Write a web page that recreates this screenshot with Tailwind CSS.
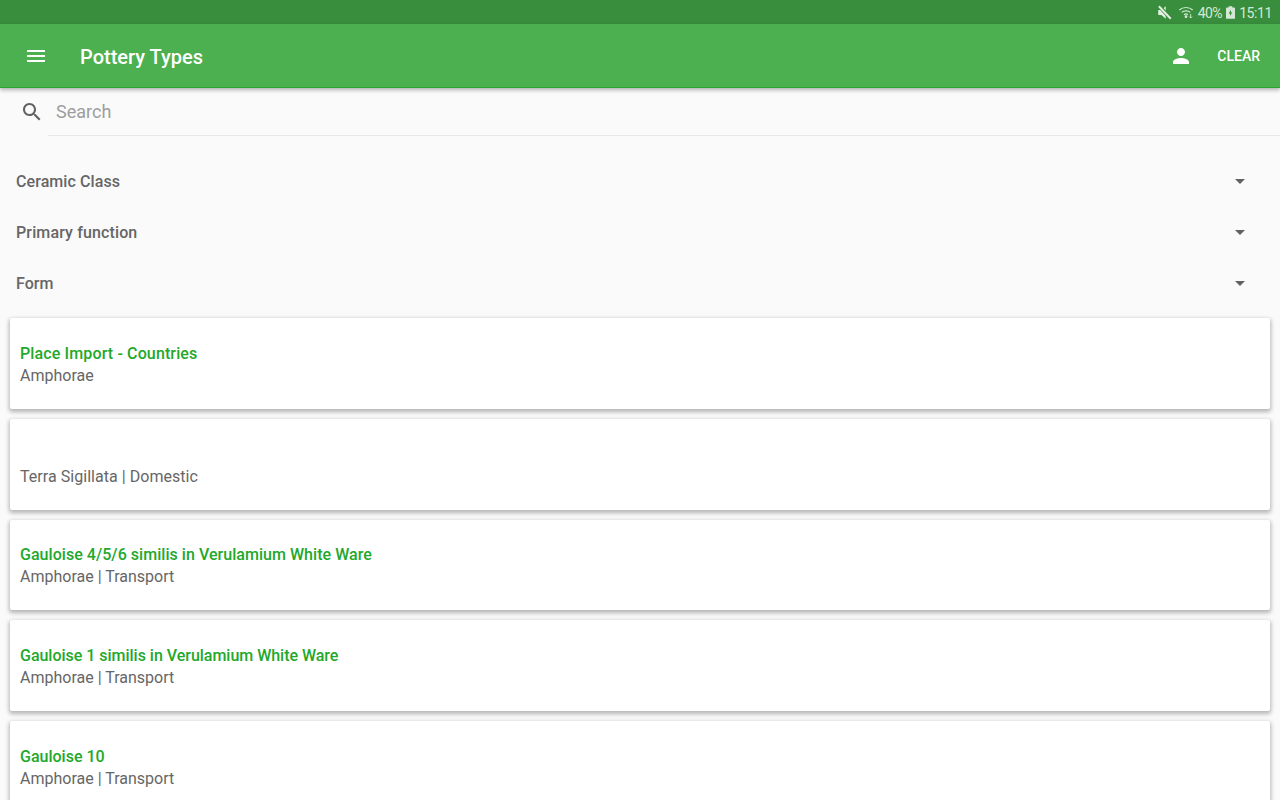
<!DOCTYPE html>
<html lang="en">
<head>
    <meta charset="UTF-8">
    <meta name="viewport" content="width=device-width, initial-scale=1.0">
    <title>Pottery Types</title>
    <script src="https://cdn.jsdelivr.net/npm/@tailwindcss/browser@4"></script>
</head>
<body class="bg-[#fafafa] font-[Roboto,sans-serif] h-[800px] overflow-hidden">
    <!-- status bar -->
    <div class="h-6 bg-[#388e3c] flex items-center justify-end pr-2 text-[14px] text-[#d5e8d6]">
        <svg class="w-[15px] h-[15px] mr-[6px]" viewBox="0 0 24 24" fill="#e4f0e4"><path d="M2 8v8h5l7 6V2L7 8H2z"/><path d="M3 1l19 21" stroke="#388e3c" stroke-width="6"/><path d="M3 2l19 20" stroke="#e4f0e4" stroke-width="3"/></svg>
        <svg class="w-4 h-4 mr-[4px]" viewBox="0 0 24 24" fill="none" stroke="#d5e8d6" stroke-width="1.8"><path d="M2 9c5.500-5 14.500-5 20 0"/><path d="M5.500 12.500c3.500-3 9.500-3 13 0"/><path d="M9 16c1.700-1.300 4.300-1.300 6 0"/><circle cx="12" cy="19" r="1.200" fill="#d5e8d6"/><path d="M19 15v6M17 19l2 2 2-2" stroke-width="1.400"/></svg>
        <span class="pt-[2px] tracking-[-0.5px] mr-[4px]">40%</span>
        <svg class="w-[9px] h-[13px] mr-[4px]" viewBox="0 0 10 14" fill="#d5e8d6"><path d="M3 0h4v1.500h2a1 1 0 0 1 1 1V13a1 1 0 0 1-1 1H1a1 1 0 0 1-1-1V2.500a1 1 0 0 1 1-1h2z"/><path d="M5.500 4L3 8h1.500v3L7 7H5.500z" fill="#388e3c"/></svg>
        <span class="pt-[2px] tracking-[-0.4px]">15:11</span>
    </div>
    <!-- app bar -->
    <header class="h-16 bg-[#4caf50] border-b border-[#2aa52f] shadow-[0_2px_4px_rgba(0,0,0,0.3)] flex items-center relative">
        <button class="w-[72px] pl-6 flex">
            <svg class="w-6 h-6" viewBox="0 0 24 24" fill="#fff"><path d="M3 18h18v-2H3v2zm0-5h18v-2H3v2zm0-7v2h18V6H3z"/></svg>
        </button>
        <h1 class="ml-2 pt-[2px] text-[20px] font-medium text-white flex-1">Pottery Types</h1>
        <svg class="w-6 h-6 mr-[24px]" viewBox="0 0 24 24" fill="#fff"><path d="M12 12c2.210 0 4-1.790 4-4s-1.790-4-4-4-4 1.790-4 4 1.790 4 4 4zm0 2c-2.670 0-8 1.340-8 4v2h16v-2c0-2.660-5.330-4-8-4z"/></svg>
        <button class="pt-[2px] text-[14px] font-medium text-white mr-5">CLEAR</button>
    </header>
    <!-- search -->
    <div class="h-12 flex">
        <div class="w-12 flex items-center justify-end pr-1">
            <svg class="w-6 h-6" viewBox="0 0 24 24" fill="#616161"><path d="M15.500 14h-.79l-.28-.27C15.410 12.590 16 11.110 16 9.500 16 5.910 13.090 3 9.500 3S3 5.910 3 9.500 5.910 16 9.500 16c1.610 0 3.090-.59 4.230-1.570l.27.28v.79l5 4.990L20.490 19l-4.990-5zm-6 0C7.010 14 5 11.990 5 9.500S7.010 5 9.500 5 14 7.010 14 9.500 11.990 14 9.500 14z"/></svg>
        </div>
        <div class="flex-1 border-b border-[#e8e8e8] pl-2 flex items-center text-[18px] text-[#9e9e9e]">Search</div>
    </div>
    <!-- filters -->
    <div class="pt-[20px]">
        <div class="h-[51px] flex items-center justify-between px-4 text-[16px] font-medium text-[#666666]">
            <span class="tracking-[0.08px]">Ceramic Class</span>
            <span class="w-0 h-0 mr-[19px] border-x-[5px] border-x-transparent border-t-[5px] border-t-[#616161]"></span>
        </div>
        <div class="h-[51px] flex items-center justify-between px-4 text-[16px] font-medium text-[#666666]">
            <span class="tracking-[0.13px]">Primary function</span>
            <span class="w-0 h-0 mr-[19px] border-x-[5px] border-x-transparent border-t-[5px] border-t-[#616161]"></span>
        </div>
        <div class="h-[51px] flex items-center justify-between px-4 text-[16px] font-medium text-[#666666]">
            <span>Form</span>
            <span class="w-0 h-0 mr-[19px] border-x-[5px] border-x-transparent border-t-[5px] border-t-[#616161]"></span>
        </div>
    </div>
    <!-- results -->
    <div class="mt-[9px] px-[10px] flex flex-col gap-[10px]">
        <div class="h-[90.75px] bg-white rounded-[2px] shadow-[0_2px_4px_1px_rgba(0,0,0,0.28)] px-[10px] pt-[25px]">
            <div class="h-[22px] leading-[22px] text-[16px] font-medium text-[#22a82a] tracking-[0.13px]">Place Import - Countries</div>
            <div class="h-[22px] leading-[22px] text-[16px] text-[#666666]">Amphorae</div>
        </div>
        <div class="h-[90.75px] bg-white rounded-[2px] shadow-[0_2px_4px_1px_rgba(0,0,0,0.28)] px-[10px] pt-[25px]">
            <div class="h-[22px] leading-[22px] text-[16px] font-medium text-[#22a82a]"></div>
            <div class="h-[22px] leading-[22px] text-[16px] text-[#666666] tracking-[0.04px]">Terra Sigillata | Domestic</div>
        </div>
        <div class="h-[90.75px] bg-white rounded-[2px] shadow-[0_2px_4px_1px_rgba(0,0,0,0.28)] px-[10px] pt-[24px]">
            <div class="h-[22px] leading-[22px] text-[16px] font-medium text-[#22a82a] tracking-[0.04px]">Gauloise 4/5/6 similis in Verulamium White Ware</div>
            <div class="h-[22px] leading-[22px] text-[16px] text-[#666666]">Amphorae | Transport</div>
        </div>
        <div class="h-[90.75px] bg-white rounded-[2px] shadow-[0_2px_4px_1px_rgba(0,0,0,0.28)] px-[10px] pt-[25px]">
            <div class="h-[22px] leading-[22px] text-[16px] font-medium text-[#22a82a] tracking-[-0.02px]">Gauloise 1 similis in Verulamium White Ware</div>
            <div class="h-[22px] leading-[22px] text-[16px] text-[#666666]">Amphorae | Transport</div>
        </div>
        <div class="h-[90.75px] bg-white rounded-[2px] shadow-[0_2px_4px_1px_rgba(0,0,0,0.28)] px-[10px] pt-[25px]">
            <div class="h-[22px] leading-[22px] text-[16px] font-medium text-[#22a82a]">Gauloise 10</div>
            <div class="h-[22px] leading-[22px] text-[16px] text-[#666666]">Amphorae | Transport</div>
        </div>
    </div>
</body>
</html>
